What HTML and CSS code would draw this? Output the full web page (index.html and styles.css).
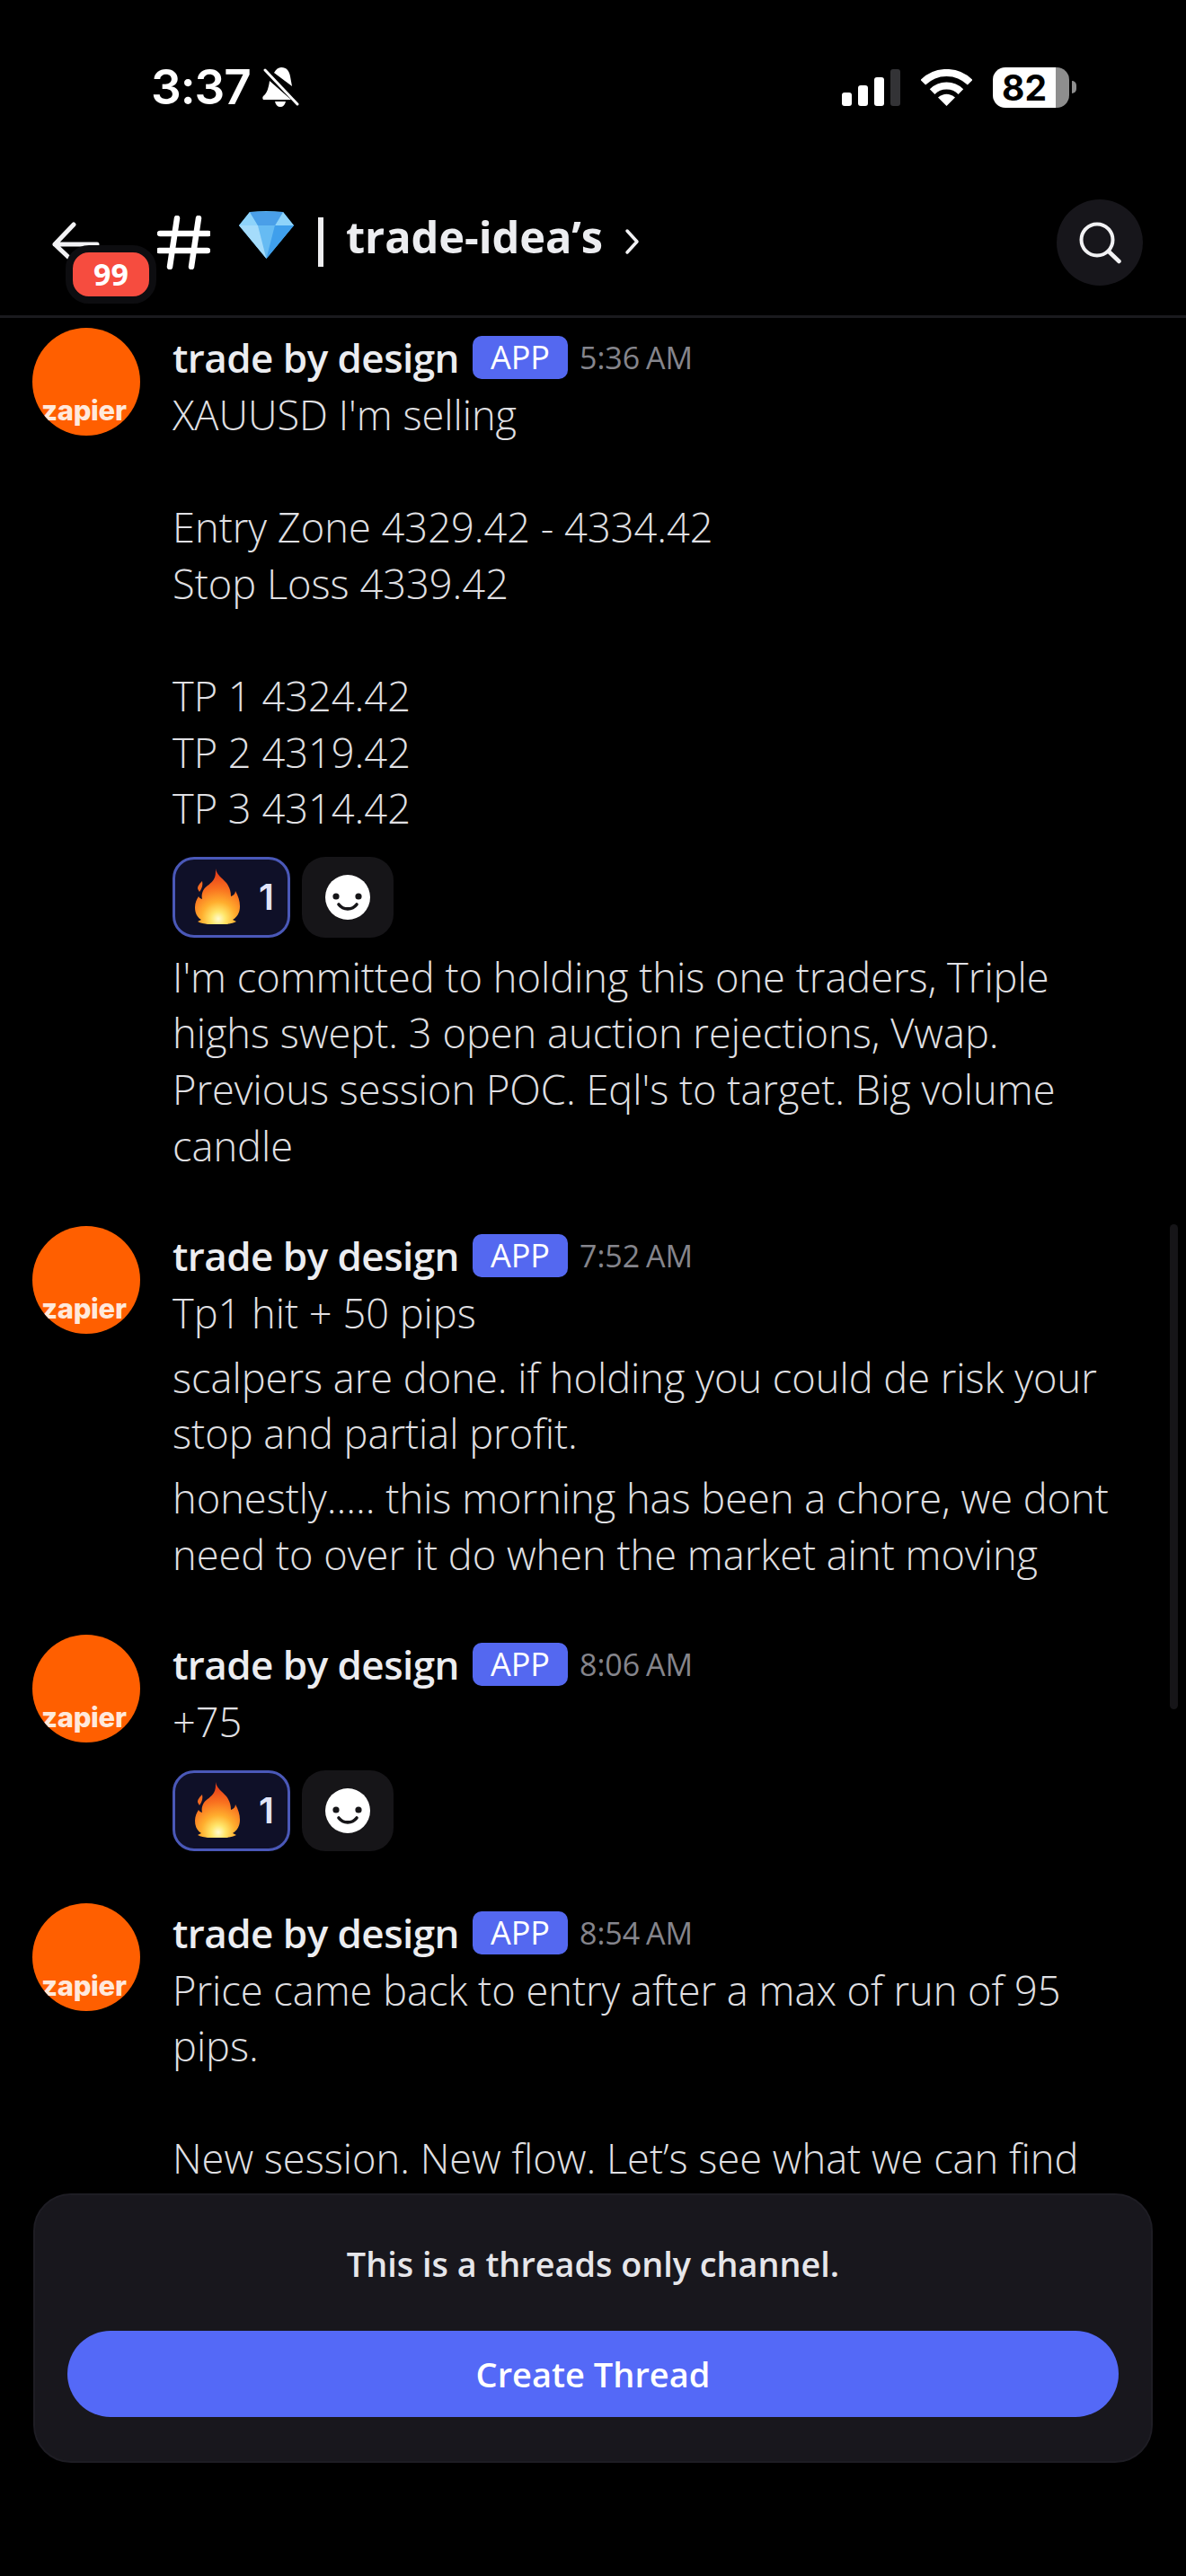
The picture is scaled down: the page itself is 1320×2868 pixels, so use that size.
FILE: index.html
```html
<!DOCTYPE html>
<html lang="en">
<head>
<meta charset="utf-8">
<title>trade-idea's</title>
<link rel="stylesheet" href="styles.css">
</head>
<body>
<div class="phone">
  <svg class="defs" width="0" height="0" aria-hidden="true">
    <defs>
      <radialGradient id="fireGrad" gradientUnits="userSpaceOnUse" cx="26" cy="56" r="50">
        <stop offset="0" stop-color="#fffbd0"/>
        <stop offset=".16" stop-color="#ffe66a"/>
        <stop offset=".38" stop-color="#ffae2e"/>
        <stop offset=".68" stop-color="#f9701f"/>
        <stop offset="1" stop-color="#e8421a"/>
      </radialGradient>
      <symbol id="fire" viewBox="0 0 50 63">
        <path fill="url(#fireGrad)" d="M23 0c1 7 7 10 12 16 3 4 5 9 5 15 3-1 5-3 5-6 3 5 5 11 5 17 0 7-3 12-8 15l4 2c-3 2-7 2-10 3H14c-3-1-8-1-11-3l4-2C2 54 0 49 0 43c0-5 2-9 4-12 1 2 2 2 4 3-1-4 0-8 2-11 3-4 8-6 11-11 2-3 2-7 2-12z"/>
        <path fill="#f36a20" d="M8 14c1 4 0 8-3 12-1-2-2-3-2-4 0-3 3-6 5-8z"/>
      </symbol>
      <symbol id="smile" viewBox="0 0 50 50">
        <circle cx="25" cy="25" r="25" fill="#fff"/>
        <circle cx="12" cy="24" r="3.6" fill="#161518"/>
        <circle cx="37" cy="24" r="3.6" fill="#161518"/>
        <path d="M15 33c5 6.500 15 6.500 20 0" fill="none" stroke="#161518" stroke-width="3.600" stroke-linecap="round"/>
      </symbol>
    </defs>
  </svg>

  <div class="status">
    <span class="clock">3:37</span>
    <svg class="bell" viewBox="0 0 41 44">
      <path fill="#fff" d="M13 6C15 2 18 0 21 0c6 0 9 4 10 10l2 11L13 6zM8 15l24 21H1c-1-1-1-3 0-4 4-3 6-9 7-17zM14 38h12c-1 4-3 6-6 6s-5-2-6-6z"/>
      <path stroke="#fff" stroke-width="3" stroke-linecap="round" d="M3 3l36 38"/>
    </svg>
    <div class="status-right">
      <div class="signal">
        <span class="bar bar-1"></span><span class="bar bar-2"></span><span class="bar bar-3"></span><span class="bar bar-4"></span>
      </div>
      <svg class="wifi" viewBox="0 0 57 41">
        <path fill="none" stroke="#fff" stroke-width="8" d="M2.300 14.800A37 37 0 0 1 54.700 14.800"/>
        <path fill="none" stroke="#fff" stroke-width="8" d="M12.600 25.100A22.500 22.500 0 0 1 44.400 25.100"/>
        <path fill="#fff" d="M28.500 41L19 31.500Q28.500 24 38 31.500Z"/>
      </svg>
      <div class="battery"><span class="battery-level">82</span><span class="battery-nub"></span></div>
    </div>
  </div>

  <header class="header">
    <svg class="back" viewBox="0 0 53 44">
      <path fill="none" stroke="#f2f2f4" stroke-width="5" stroke-linecap="round" stroke-linejoin="round" d="M24 3L3 25l18 17M3 25h47"/>
    </svg>
    <span class="badge">99</span>
    <svg class="hash" viewBox="0 0 59 60">
      <path fill="none" stroke="#fff" stroke-width="6.500" stroke-linecap="round" d="M22 3L14 57M46 3l-8 54M3 20h54M2 39h54"/>
    </svg>
    <svg class="diamond" viewBox="0 0 61 53">
      <path fill="#58b2f0" d="M12 1Q30 -1 49 1l12 15-30.500 37L0 16z"/>
      <path fill="#8ed3fa" d="M12 1l9 15H0zM49 1l-9 15h21z"/>
      <path fill="#4a9fe8" d="M12 1h37l-9 15H21z"/>
      <path fill="#66bbf3" d="M21 16h19L30.500 53z"/>
      <path fill="#a5dcfb" d="M0 16h21l9.500 37z"/>
      <path fill="#3f9fec" d="M61 16H40L30.500 53z"/>
    </svg>
    <span class="divider"></span>
    <span class="title">trade-idea’s</span>
    <svg class="chevron" viewBox="0 0 17 30">
      <path fill="none" stroke="#f2f2f4" stroke-width="3.500" stroke-linecap="round" stroke-linejoin="round" d="M3 3l11 12L3 27"/>
    </svg>
    <div class="search">
      <svg class="search-icon" viewBox="0 0 48 48">
        <circle cx="21" cy="21" r="17.500" fill="none" stroke="#f2f2f4" stroke-width="4"/>
        <path stroke="#f2f2f4" stroke-width="4.500" stroke-linecap="round" d="M34 34l11.500 11"/>
      </svg>
    </div>
  </header>

  <main class="chat">
    <article class="msg">
      <div class="avatar"><span class="avatar-text">zapier</span></div>
      <div class="msg-body">
        <div class="meta"><span class="name">trade by design</span><span class="app">APP</span><time class="time">5:36 AM</time></div>
        <p class="text">XAUUSD I'm selling<br><br>Entry Zone 4329.42 - 4334.42<br>Stop Loss 4339.42<br><br>TP 1 4324.42<br>TP 2 4319.42<br>TP 3 4314.42</p>
        <div class="reactions">
          <div class="reaction"><svg class="fire"><use href="#fire"/></svg><span class="count">1</span></div>
          <div class="add"><svg class="face"><use href="#smile"/></svg></div>
        </div>
        <p class="text after-reactions">I'm committed to holding this one traders, Triple<br>highs swept. 3 open auction rejections, Vwap.<br>Previous session POC. Eql's to target. Big volume<br>candle</p>
      </div>
    </article>

    <article class="msg">
      <div class="avatar"><span class="avatar-text">zapier</span></div>
      <div class="msg-body">
        <div class="meta"><span class="name">trade by design</span><span class="app">APP</span><time class="time">7:52 AM</time></div>
        <p class="text">Tp1 hit + 50 pips</p>
        <p class="text next">scalpers are done. if holding you could de risk your<br>stop and partial profit.</p>
        <p class="text next">honestly..... this morning has been a chore, we dont<br>need to over it do when the market aint moving</p>
      </div>
    </article>

    <article class="msg">
      <div class="avatar"><span class="avatar-text">zapier</span></div>
      <div class="msg-body">
        <div class="meta"><span class="name">trade by design</span><span class="app">APP</span><time class="time">8:06 AM</time></div>
        <p class="text">+75</p>
        <div class="reactions">
          <div class="reaction"><svg class="fire"><use href="#fire"/></svg><span class="count">1</span></div>
          <div class="add"><svg class="face"><use href="#smile"/></svg></div>
        </div>
      </div>
    </article>

    <article class="msg">
      <div class="avatar"><span class="avatar-text">zapier</span></div>
      <div class="msg-body">
        <div class="meta"><span class="name">trade by design</span><span class="app">APP</span><time class="time">8:54 AM</time></div>
        <p class="text">Price came back to entry after a max of run of 95<br>pips.<br><br>New session. New flow. Let’s see what we can find</p>
      </div>
    </article>

    <div class="scrollbar"></div>
  </main>

  <section class="composer">
    <p class="composer-text">This is a threads only channel.</p>
    <button class="create">Create Thread</button>
  </section>
</div>
</body>
</html>
```

FILE: styles.css
```css
* { box-sizing: border-box; }
html, body { margin: 0; padding: 0; background: #000; }
body { font-family: "Open Sans", "Noto Sans", sans-serif; color: #e0e0e4; }
.phone { position: relative; width: 1320px; height: 2868px; overflow: hidden; background: #000; display: flex; flex-direction: column; }
.defs { position: absolute; }

.status { height: 194px; flex: none; display: flex; align-items: center; padding-left: 168px; color: #fff; }
.clock { font-family: "Inter", sans-serif; font-weight: 600; font-size: 53px; letter-spacing: -1px; width: 124px; }
.bell { width: 41px; height: 44px; }
.status-right { margin-left: auto; margin-right: 130px; display: flex; align-items: center; }
.signal { display: flex; align-items: flex-end; gap: 7px; height: 41px; }
.bar { width: 11px; background: #fff; border-radius: 3px; display: block; }
.bar-1 { height: 15px; }
.bar-2 { height: 23px; }
.bar-3 { height: 32px; }
.bar-4 { height: 41px; background: #333336; }
.wifi { width: 57px; height: 41px; margin-left: 23px; }
.battery { position: relative; width: 85px; height: 45px; margin-left: 23px; border-radius: 14px; background: linear-gradient(90deg, #fff 0, #fff 70px, #8e8e8e 70px); }
.battery-level { display: block; width: 70px; text-align: center; font-family: "Inter", sans-serif; font-weight: 700; font-size: 39px; line-height: 45px; color: #000; }
.battery-nub { position: absolute; left: 88px; top: 15px; width: 5px; height: 14px; background: #8e8e8e; border-radius: 0 6px 6px 0; }

.header { position: relative; flex: none; height: 160px; padding: 0 48px 5px 58px; display: flex; align-items: center; border-bottom: 3px solid #1a1a1e; }
.back { width: 53px; height: 44px; margin-top: -2px; }
.badge { position: absolute; left: 73px; top: 79px; width: 101px; height: 65px; border: 8px solid #0d0d10; border-radius: 26px; background: #f64c3f; color: #fff; font-weight: 700; font-size: 34px; line-height: 49px; text-align: center; }
.hash { width: 59px; height: 60px; margin-left: 64px; }
.diamond { width: 61px; height: 53px; margin-left: 32px; margin-bottom: 18px; }
.divider { width: 6px; height: 55px; margin-left: 27px; margin-bottom: 2px; background: #eeeef0; }
.title { margin-left: 25px; font-weight: 700; font-size: 48.8px; letter-spacing: -.1px; color: #ecedf0; margin-bottom: 14px; white-space: nowrap; }
.chevron { width: 17px; height: 30px; margin-left: 24px; margin-bottom: 2px; }
.search { margin-left: auto; width: 96px; height: 96px; border-radius: 50%; background: #17161b; display: flex; align-items: center; justify-content: center; }
.search-icon { width: 48px; height: 48px; }

.chat { position: relative; flex: 1; min-height: 0; overflow: hidden; padding: 11px 36px 0; display: flex; flex-direction: column; gap: 58px; }
.msg { display: flex; gap: 36px; flex: none; }
.avatar { flex: none; position: relative; width: 120px; height: 120px; border-radius: 50%; background: #ff5f00; overflow: hidden; }
.avatar-text { position: absolute; left: 10px; top: 72px; font-family: "Inter", sans-serif; font-weight: 800; font-size: 31px; line-height: 40px; letter-spacing: -.3px; color: #ffe9dc; }
.msg-body { min-width: 0; flex: 1; }
.meta { display: flex; align-items: center; height: 66px; white-space: nowrap; }
.name { font-weight: 600; font-size: 44px; letter-spacing: -.55px; color: #ecedf0; }
.app { margin-left: 15px; width: 106px; height: 48px; border-radius: 10px; background: #5468f0; color: #fff; font-weight: 500; font-size: 36px; line-height: 48px; text-align: center; }
.time { margin-left: 13px; font-size: 34px; word-spacing: -2px; color: #85858c; }
.text { margin: 0; font-size: 45.2px; font-weight: 300; line-height: 62.6px; color: #e0e0e4; white-space: nowrap; }
.next { margin-top: 9px; }
.reactions { display: flex; gap: 13px; margin-top: 22px; }
.after-reactions { margin-top: 13px; }
.reaction { width: 131px; height: 90px; border: 3px solid #4a58b8; border-radius: 24px; background: #0f1028; display: flex; align-items: center; padding-left: 22px; }
.fire { width: 50px; height: 63px; }
.count { margin-left: 21px; font-family: "Inter", sans-serif; font-weight: 600; font-size: 40px; color: #e2e4f8; }
.add { width: 102px; height: 90px; border-radius: 26px; background: #161518; display: flex; align-items: center; justify-content: center; }
.face { width: 50px; height: 50px; }
.scrollbar { position: absolute; left: 1302px; top: 1009px; width: 9px; height: 540px; border-radius: 5px; background: #161518; }

.composer { position: absolute; left: 37px; top: 2442px; width: 1246px; height: 300px; border-radius: 42px; background: #18171d; border: 2px solid #1e1d24; display: flex; flex-direction: column; align-items: center; }
.composer-text { margin: 52px 0 0; font-size: 37.8px; font-weight: 600; line-height: 50px; color: #e6e6ea; }
.create { margin-top: 49px; width: 1170px; height: 96px; border: 0; border-radius: 48px; background: #5469f7; color: #fff; font-family: inherit; font-size: 38px; font-weight: 600; }
```
